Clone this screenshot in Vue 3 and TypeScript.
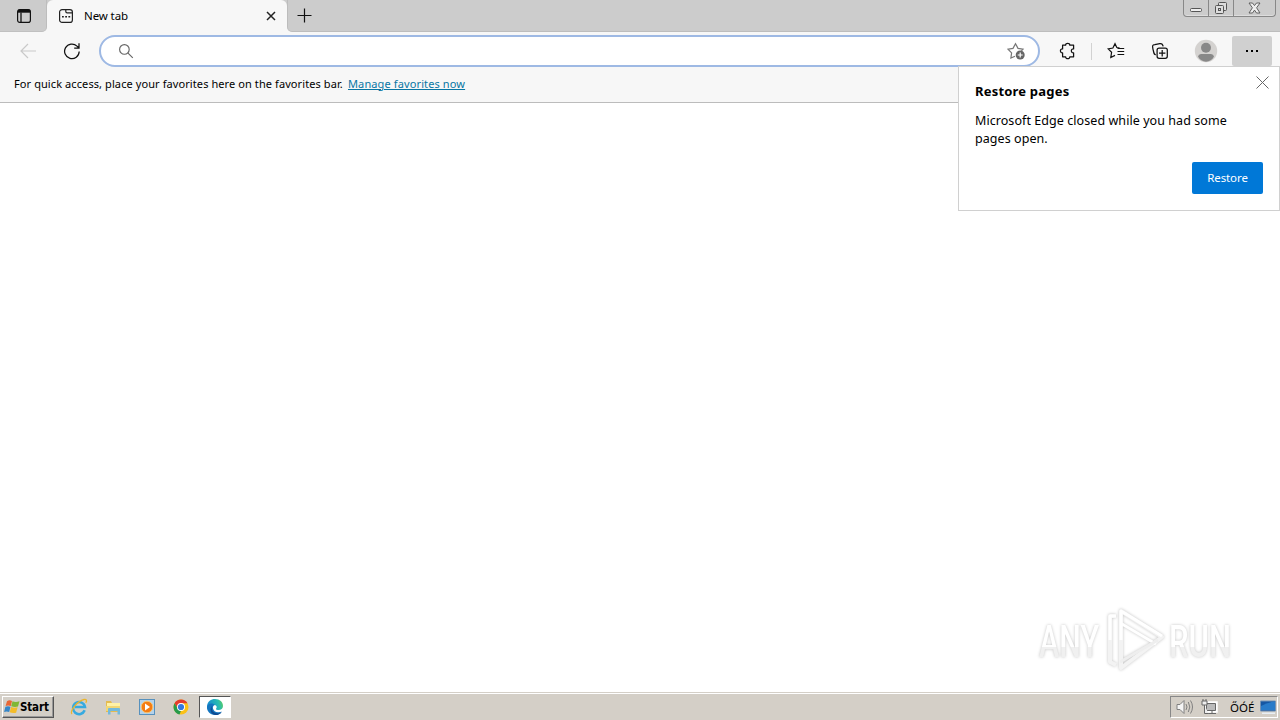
<script setup lang="ts">
const favoritesHint = 'For quick access, place your favorites here on the favorites bar.'
const languageLabel = 'ŐÓÉ'
</script>

<template>
  <div class="screen">
    <header class="tabstrip">
      <div class="tab-actions">
        <svg width="16" height="16" viewBox="0 0 16 16" fill="none" stroke="#111" stroke-width="1.2"><rect x="1.6" y="1.6" width="12.8" height="12.8" rx="2.2" /><path d="M2 3.2h12" stroke-width="3" /><path d="M5 4.5v10" stroke-width="1.3" /></svg>
      </div>
      <div class="tab">
        <svg width="16" height="16" viewBox="0 0 16 16" fill="none" stroke="#222" stroke-width="1.2"><rect x="1.6" y="1.6" width="12.8" height="12.8" rx="2.5" /><path d="M7.8 2v1.5q0 1.3 1.3 1.3H14" /><path d="M4 8.8h1.8M7.2 8.8H9M10.4 8.8h1.8" stroke-width="1.6" /></svg>
        <span class="tab-title">New tab</span>
        <svg class="tab-close" width="10" height="10" viewBox="0 0 10 10" stroke="#222" stroke-width="1.5"><path d="m1 1 8 8m0-8L1 9" /></svg>
      </div>
      <div class="new-tab"><svg width="16" height="16" viewBox="0 0 16 16" stroke="#111" stroke-width="1.2"><path d="M7.5 .5v14M.5 7.5h14" /></svg></div>
      <div class="window-controls">
        <span class="wc minimize"><svg width="14" height="8" viewBox="0 0 14 8" fill="#eee" stroke="#555"><rect x="1.5" y="2.5" width="11" height="3" rx="1" /></svg></span>
        <span class="wc maximize"><svg width="14" height="14" viewBox="0 0 14 14" fill="#ddd" stroke="#555"><rect x="4.5" y="1.5" width="8" height="8" rx="1" /><rect x="1.5" y="4.5" width="8" height="8" rx="1" /><rect x="4.5" y="7.5" width="2" height="2" /></svg></span>
        <span class="wc close"><svg width="13" height="12" viewBox="0 0 13 12" fill="#eee" stroke="#555" stroke-width=".9"><path d="M1 1h3.5l2 2.6L8.5 1H12L8.6 5.8 12 11H8.5l-2-2.9-2 2.9H1l3.4-5.2z" /></svg></span>
      </div>
    </header>

    <nav class="toolbar">
      <svg class="back" width="18" height="16" viewBox="0 0 18 16" fill="none" stroke="#c9c9c9" stroke-width="1.2"><path d="M17 8H2m7-7L2 8l7 7" /></svg>
      <svg class="reload" width="18" height="18" viewBox="0 0 18 18" fill="none" stroke="#111" stroke-width="1.25"><path d="M16.2 9.5A7.3 7.3 0 1 1 14 4.1L16 6M16 1.2V6h-4.8" /></svg>
      <div class="address">
        <svg class="search" width="16" height="16" viewBox="0 0 16 16" fill="none" stroke="#666" stroke-width="1.15"><circle cx="6.4" cy="6.4" r="4.8" /><path d="m9.8 9.8 5 5" /></svg>
        <svg class="star" width="19" height="18" viewBox="0 0 19 18" fill="none" stroke="#777" stroke-width="1.2"><path d="M8 14.2 3.9 16l.7-5.1L1 7.2l5-.8L8.5 1.7 11 6.4l5 .7-1.6 1.7" /><circle cx="13.2" cy="13" r="4.5" fill="#666" stroke="none" /><path d="M13.2 10.5v5m-2.5-2.5h5" stroke="#fff" /></svg>
      </div>
      <svg class="ext" width="18" height="18" viewBox="0 0 18 18" fill="none" stroke="#111" stroke-width="1.25" stroke-linejoin="round"><path d="M3.6 3.2h3c-.1-2.6 4.3-2.6 4.2 0h3.8v3.7c-3-.5-3 4.3 0 4v3.9h-3.8c.2 2.4-4.3 2.4-4.2 0h-3v-3.9c-2.9.2-2.9-4.4 0-4z" /></svg>
      <i class="divider"></i>
      <svg class="favorites" width="18" height="18" viewBox="0 0 18 18" fill="none" stroke="#111" stroke-width="1.2"><path d="M12.5 5.8 9.8 5.5 8 1.7 5.9 6l-4.8.8 3.5 3.5L3.8 15.5 8 13.4M10.5 6.5h6.7M10.5 9.5h6.7M10.5 12.5h6.7" /></svg>
      <svg class="collections" width="18" height="18" viewBox="0 0 18 18" fill="none" stroke="#111" stroke-width="1.25"><path d="M4.8 12.7C3 12.9 2.8 11 1.9 6.8 1.3 3.5 1.3 3 3.8 2.6l5-1c2-.4 2.8.1 3.4 2.8" /><rect x="6.1" y="6.1" width="10.2" height="10.2" rx="2" /><path d="M11.2 8v6.4M8 11.2h6.4" /></svg>
      <svg class="avatar" width="24" height="24" viewBox="0 0 24 24"><circle cx="12" cy="12" r="11.2" fill="#d4d2d0" /><circle cx="12" cy="8.8" r="5" fill="#888" /><path d="M4 17.5Q4.5 15 7 15h10q2.5 0 3 2.5c-1.5 3.3-4.7 5.2-8 5.2s-6.5-1.9-8-5.2" fill="#888" /></svg>
      <div class="more"><i></i><i></i><i></i></div>
    </nav>

    <section class="favorites-bar">
      <span class="hint">{{ favoritesHint }}</span><a class="manage">Manage favorites now</a>
    </section>

    <main class="page">
      <svg class="watermark" width="204" height="68" viewBox="0 0 204 68">
        <defs>
          <linearGradient id="fade" x1="0" y1="0" x2="0" y2="1"><stop offset=".6" stop-color="#fff" /><stop offset=".61" stop-color="#f0f0f0" /></linearGradient>
        </defs>
        <g class="mark">
          <text x="5" y="51" textLength="60" lengthAdjust="spacingAndGlyphs">ANY</text>
          <text x="135" y="51" textLength="62" lengthAdjust="spacingAndGlyphs">RUN</text>
          <g fill="none" stroke-width="4" stroke-linejoin="round"><path d="M82 10H76V56l6 3" stroke="#f3f3f3" /><path d="m87 5 41 26-41 31z" stroke="#f3f3f3" /><path d="M87 34V5l41 25M88 18l34 20M76 34V10h6" stroke="#fff" stroke-width="3" /><path d="M86 56l38-22" stroke="#eee" stroke-width="3" /></g>
        </g>
      </svg>
    </main>

    <footer class="taskbar">
      <button class="start">
        <svg width="16" height="16" viewBox="0 0 16 16"><path d="M3 2.2Q5.5.6 8 2L6.8 7Q4 5.8 1.6 7z" fill="#e86735" /><path d="M8.5 2.2q3 1.4 7 0L14 7.5Q10.7 8.6 7.2 7.2z" fill="#80b735" /><path d="M1.4 7.8Q4 6.6 6.5 7.8L5.2 13Q2.6 12 .1 13z" fill="#3586c8" /><path d="M7.1 8q3 1.3 6.5.3l-1.5 5.4q-3.2 1-6.4-.4z" fill="#f4bc29" /></svg>
        <span>Start</span>
      </button>
      <div class="launchers">
        <svg width="18" height="18" viewBox="0 0 18 18" fill="none"><path d="M14.7 12.3A6 6 0 1 1 15 9H5" stroke="#36aae0" stroke-width="2.5" /><path d="M2 16C-1 14 7 3 14 1.5c3-.6 3 1.8 1.7 3.2" stroke="#ebb52d" stroke-width="1.3" /></svg>
        <svg width="18" height="18" viewBox="0 0 18 18"><path d="M2 3h5l1 2h7v9H2z" fill="#e4bb50" /><path d="M3 5h13v5H3z" fill="#fff1a5" /><path d="M2 8h14v5H2z" fill="#f1d775" /><path d="M4 16.5V11q0-1 1-1h10q1 0 1 1v5.5h-2.5V13h-7v3.5z" fill="#73b9dc" /></svg>
        <svg width="18" height="18" viewBox="0 0 18 18"><rect x="1.5" y="1.5" width="15" height="15" fill="#b5d2ea" stroke="#5791bd" /><circle cx="9" cy="9" r="5.8" fill="#f47c13" stroke="#f9c36c" /><path d="m7 5.5 5 3.5-5 3.5z" fill="#fff" /></svg>
        <svg width="18" height="18" viewBox="0 0 18 18"><circle cx="9" cy="9" r="7.5" fill="#fbc116" /><path d="M2.5 5.3A7.5 7.5 0 0 1 15.5 5.3H9L6 11z" fill="#e33b2e" /><path d="M2.5 5.3 6 11l3 1.7-1.5 3.7A7.5 7.5 0 0 1 2.5 5.3" fill="#279b4b" /><circle cx="9" cy="9" r="4" fill="#fff" /><circle cx="9" cy="9" r="3.1" fill="#3478df" /></svg>
      </div>
      <div class="edge-task">
        <svg width="18" height="18" viewBox="0 0 18 18"><defs><linearGradient id="edge" x1="0" y1=".2" x2="1" y2="0"><stop stop-color="#168dcf" /><stop offset=".65" stop-color="#28bcb2" /><stop offset="1" stop-color="#65ce55" /></linearGradient></defs><path d="M1 8C1.5 3.5 5 1 9 1c4.8 0 8 3 8 7 0 2.7-2.2 4.2-5 4-1.8 0-2.7-.7-1.5-2 .7-1.2-.3-3-2.4-3C5 7 1 9 1 13z" fill="url(#edge)" /><path d="M1 9c1-4 5.8-4.5 7.8-2C5.5 7.8 6.5 14 12 14.3c1.5.1 2.8-.3 3.8-.8-1.6 2.5-4.2 3.7-7 3.5C4 16.8.8 13.3 1 9" fill="#1475bf" /><path d="M6 8c-1.2 4 1.5 7.3 6 7.3 1.4 0 2.7-.5 3.8-1.4-1.6 2.3-4 3.2-6.5 3.1C4.4 16.6 3.4 11 6 8" fill="#104b91" /></svg>
      </div>
      <div class="tray">
        <svg width="18" height="16" viewBox="0 0 18 16" fill="none" stroke="#808080"><path d="M1 5.5h3l4-4v13l-4-4H1z" fill="#f5f5f5" /><path d="M10 5q2 3 0 6M12.3 3q3 5 0 10M14.5 1.5q4 6.5 0 13" /></svg>
        <svg class="network" width="17" height="16" viewBox="0 0 17 16" fill="none" stroke="#666"><path d="M4.5 3.5h11v9h-11z" stroke="#fff" stroke-width="2.5" /><path d="M5.5 4.5h9v7h-9z" fill="#bbb" /><path d="M7 14.5h8M11 12v2" /><path d="M1 2h5v4H1zM2 0v2M5 0v2M3.5 6v8.5h4" fill="#eee" /></svg>
        <span class="lang">{{ languageLabel }}</span>
        <svg class="display" width="16" height="15" viewBox="0 0 16 15"><path d="M.5 1h15v10H.5z" fill="#1557a3" stroke="#7392b4" /><path d="M1 6Q8 2 15 1.5V10H1z" fill="#287bc9" /><path d="M2 12.5h13v1.5H2z" fill="#e8eff5" /></svg>
      </div>
    </footer>

    <aside class="restore-dialog">
      <svg class="dismiss" width="13" height="13" viewBox="0 0 13 13" stroke="#666" stroke-width="1"><path d="m.5.5 12 12m0-12-12 12" /></svg>
      <h1>Restore pages</h1>
      <p><span>Microsoft Edge closed while you had some</span><br /><span class="line-two">pages open.</span></p>
      <button class="restore">Restore</button>
    </aside>
  </div>
</template>

<style>
html, body { margin: 0; overflow: hidden; }
</style>

<style scoped>
* { box-sizing: border-box; }
svg { display: block; flex: none; }
.screen { position: relative; display: flex; flex-direction: column; width: 1280px; height: 720px; background: #fff; font-family: "Noto Sans", "Open Sans", sans-serif; font-size: 11px; color: #000; overflow: hidden; }
.tabstrip { display: flex; height: 32px; background: #f7f7f7; flex: none; }
.tab-actions { width: 47px; background: #ccc; border-right: 1px solid #bdbdbd; border-bottom: 1px solid #c0c0c0; border-bottom-right-radius: 5px; padding: 8px 0 0 16px; }
.tab { display: flex; align-items: center; width: 240px; background: #f7f7f7; padding: 0 11px; border-radius: 6px 6px 0 0; box-shadow: 0 -7px 0 #ccc; }
.tab-title { margin-left: 10px; padding-bottom: 2px; font-size: 11.5px; letter-spacing: -.1px; }
.tab-close { margin-left: auto; }
.new-tab { flex: 1; background: #ccc; border-left: 1px solid #bcbcbc; border-bottom: 1px solid #bdbdbd; border-bottom-left-radius: 5px; padding: 8px 9px; }
.window-controls { display: flex; width: 97px; background: #ccc; border-bottom: 1px solid #bdbdbd; padding-right: 4px; }
.wc { display: flex; align-items: center; justify-content: center; width: 25px; height: 17px; border: 1px solid #888; border-top: 0; border-left: 0; box-shadow: inset 0 -1px #ddd; }
.minimize { width: 26px; border-left: 1px solid #888; border-bottom-left-radius: 4px; padding-top: 4px; }
.close { width: 42px; border-bottom-right-radius: 4px; }
.toolbar { display: flex; align-items: center; height: 35px; flex: none; background: #f7f7f7; padding: 3px 8px 0 19px; }
.reload { margin-left: 26px; }
.address { display: flex; align-items: center; justify-content: space-between; width: 941px; height: 32px; border: 2px solid #9eb9e4; border-radius: 16px; background: #fff; margin-left: 18px; padding: 0 12px 0 17px; flex: none; }
.ext { margin-left: 19px; }
.divider { width: 1px; height: 17px; background: #d2d2d2; margin: 0 15px 0 14px; }
.collections { margin-left: 26px; }
.avatar { margin-left: 25px; }
.more { display: flex; align-items: center; justify-content: center; gap: 3px; width: 40px; height: 30px; margin-left: auto; border-radius: 2px; background: #d0d0d0; }
.more i { width: 2px; height: 2px; background: #000; }
.favorites-bar { display: flex; align-items: center; height: 36px; flex: none; padding: 0 14px 3px; background: #f7f7f7; border-bottom: 1px solid #bcbcbc; white-space: nowrap; }
.hint { width: 334px; font-size: 11px; letter-spacing: .09px; }
.manage { color: #0876a4; font-size: 11px; letter-spacing: .12px; text-decoration: underline; text-underline-offset: 1px; }
.page { display: flex; align-items: flex-end; justify-content: flex-end; flex: 1; padding: 0 42px 18px; }
.mark { font: 500 45px "Roboto", sans-serif; fill: url(#fade); filter: drop-shadow(0 0 1.5px #c4c4c4); }
.taskbar { display: flex; align-items: center; height: 28px; flex: none; padding: 3px 2px 2px; background: #d4cfc7; border-top: 1px solid #d4cfc7; box-shadow: inset 0 1px #fff; }
button { font: inherit; margin: 0; }
.start { display: flex; align-items: center; width: 52px; height: 22px; border: 1px solid; border-color: #fff #555 #555 #fff; box-shadow: inset -1px -1px #999; background: #d4cfc7; padding: 0 1px 0 1px; font: bold 11.5px "DejaVu Sans Condensed", "DejaVu Sans", sans-serif; letter-spacing: -.15px; }
.launchers { display: flex; gap: 16px; margin-left: 16px; }
.edge-task { display: flex; align-items: center; justify-content: center; width: 32px; height: 22px; border: 1px solid; border-color: #555 #fff #fff #555; margin-left: 9px; background: #fff; }
.tray { display: flex; align-items: center; width: 108px; height: 22px; border: 1px solid; border-color: #888 #fff #fff #888; margin-left: auto; padding-left: 5px; }
.network { margin-left: 7px; }
.lang { width: 24px; margin-left: 12px; font-size: 11.5px; }
.display { margin-left: 6px; }
.restore-dialog { position: absolute; top: 66px; right: 0; display: flex; flex-direction: column; width: 322px; height: 145px; padding: 14px 16px 16px; border: 1px solid #d0d0d0; background: #fff; }
.dismiss { position: absolute; right: 10px; top: 9px; }
h1 { margin: 0; font-size: 13px; line-height: 21px; font-weight: 700; letter-spacing: .2px; }
p { margin: 10px 0 0; font-size: 12.5px; line-height: 18px; letter-spacing: .065px; white-space: nowrap; }
.restore { width: 71px; height: 32px; margin: auto 0 0 auto; padding: 0 0 2px; border: 0; border-radius: 2px; background: #0078d7; color: #fff; font-size: 11.5px; letter-spacing: -.1px; }
</style>
